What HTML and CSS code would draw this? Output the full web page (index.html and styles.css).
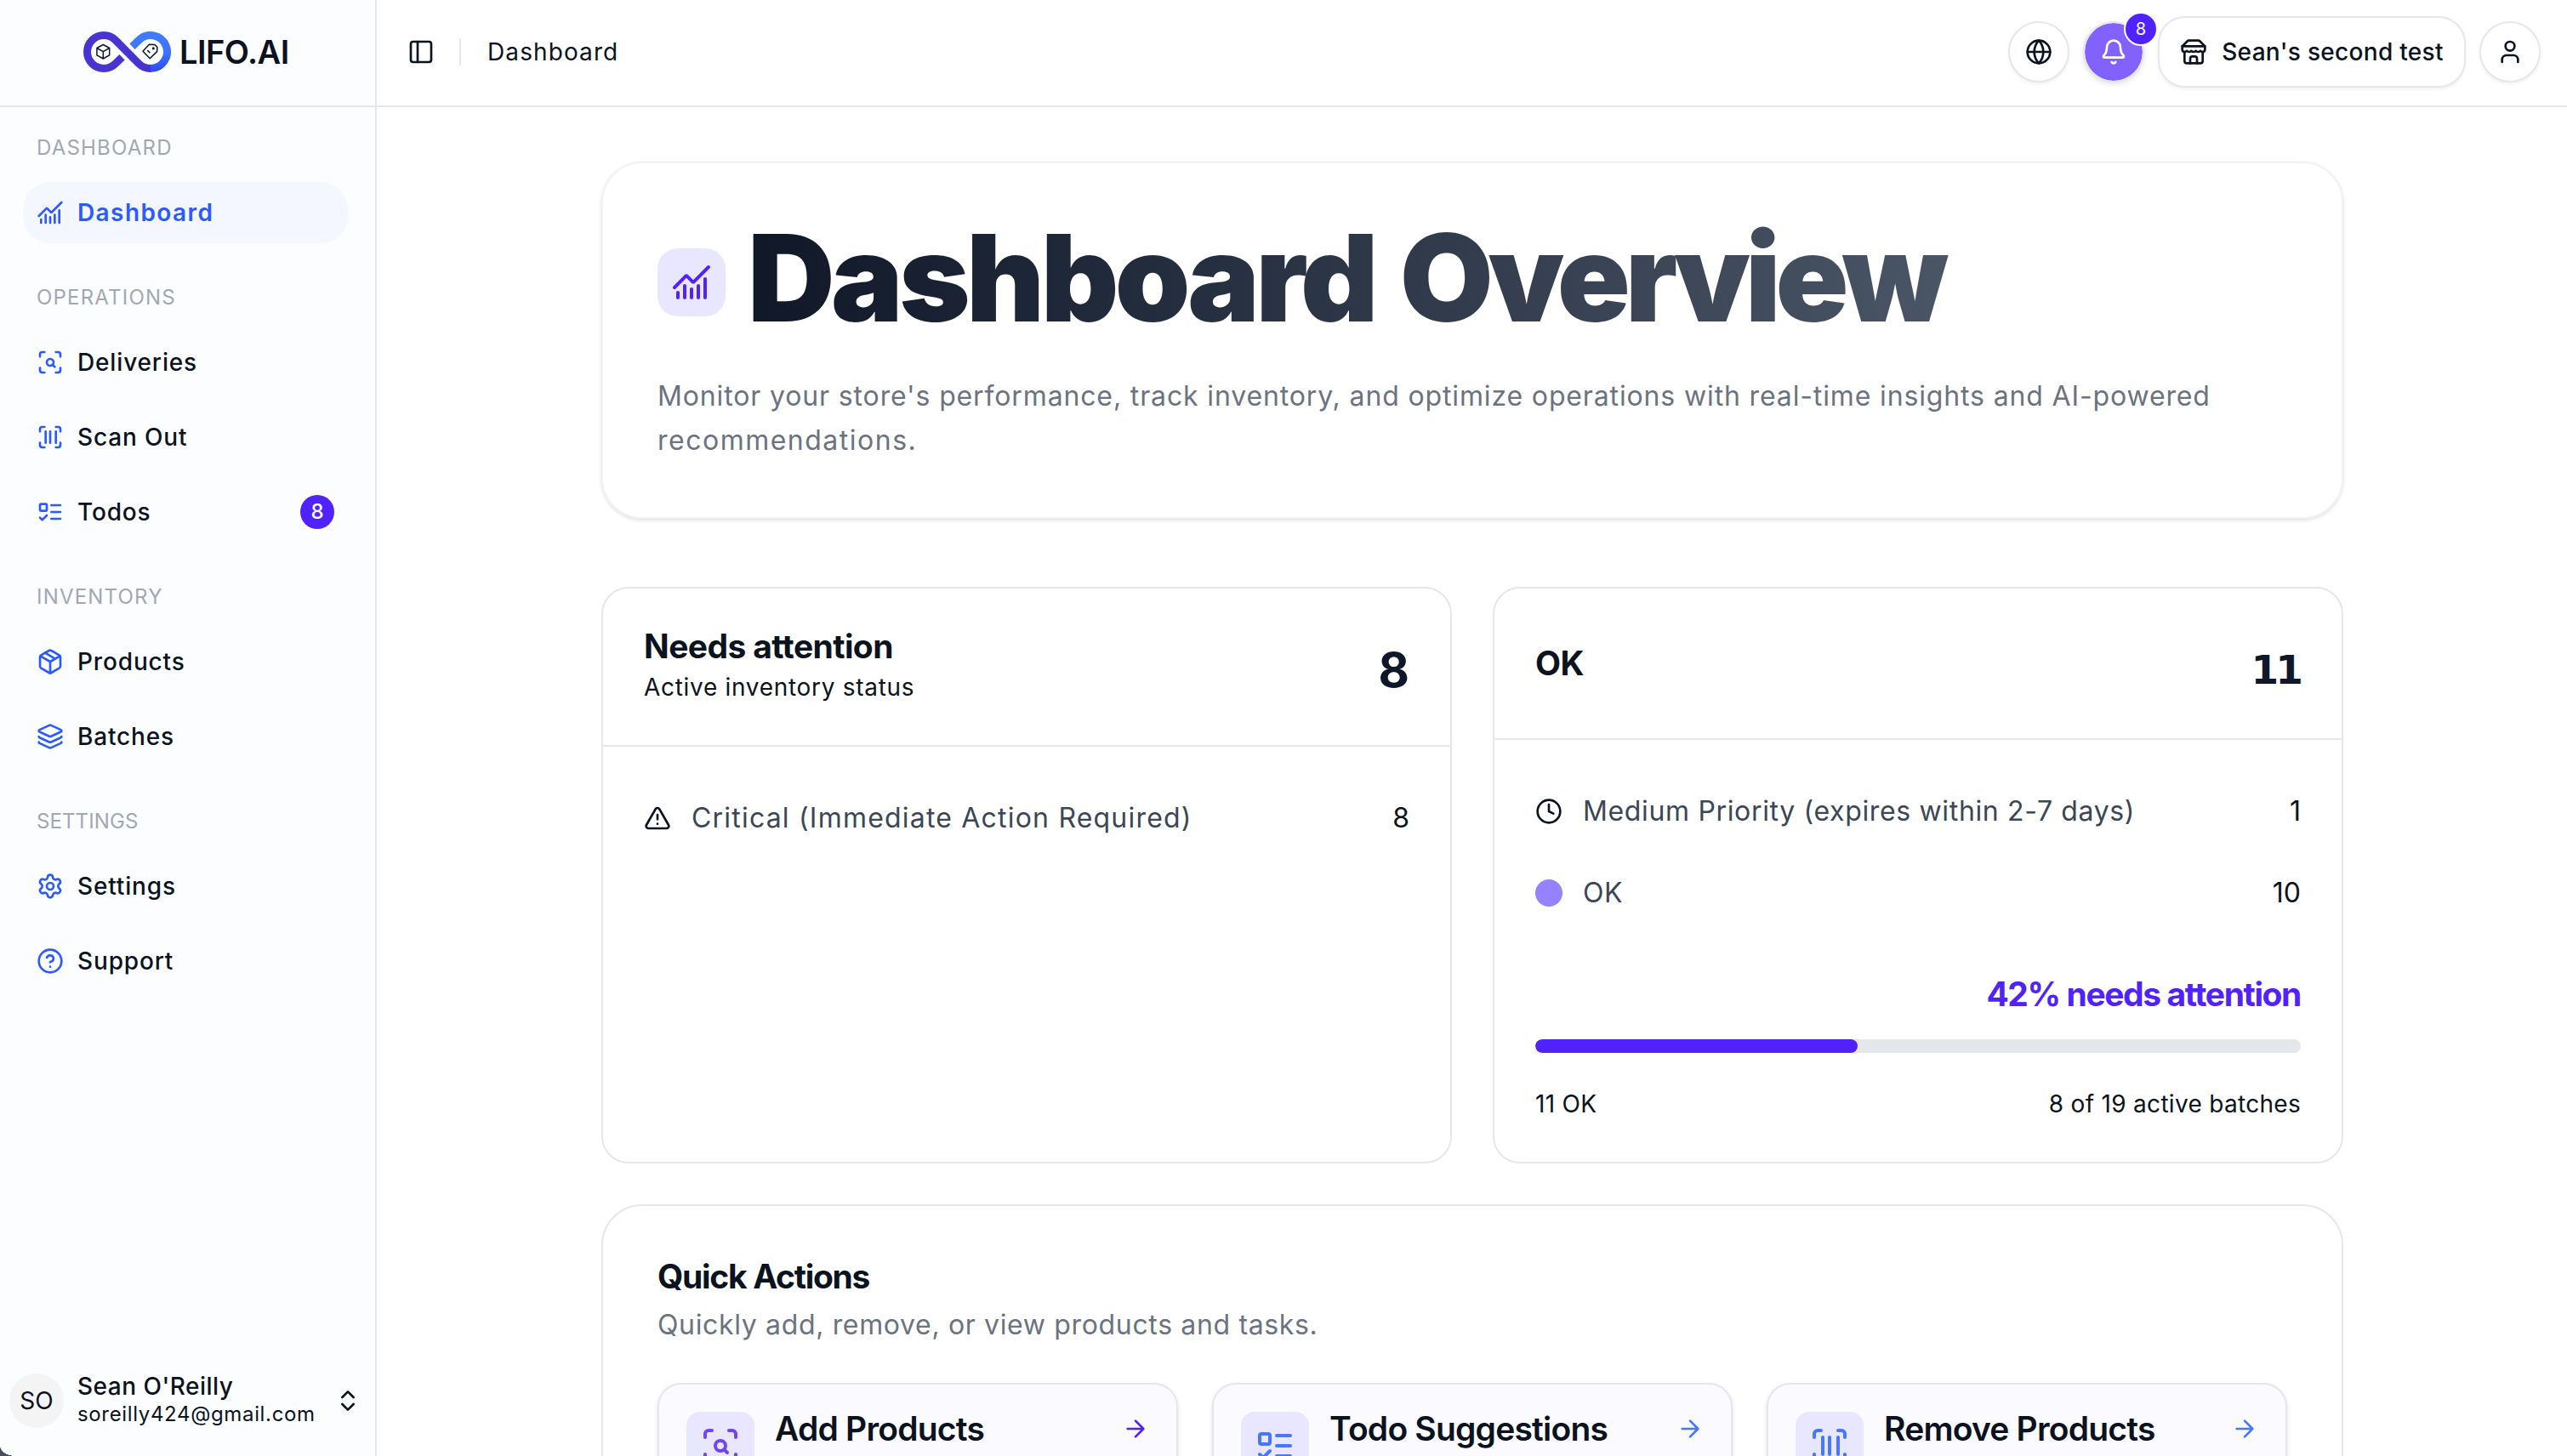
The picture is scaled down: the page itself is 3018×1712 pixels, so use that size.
FILE: index.html
```html
<!DOCTYPE html>
<html lang="en">

<head>
    <meta charset="UTF-8">
    <meta name="viewport" content="width=device-width, initial-scale=1.0">
    <title>Dashboard - LIFO.AI</title>
    <link rel="stylesheet" href="styles.css">
</head>

<body>
    <!-- shared icons -->
    <svg class="icon-defs" aria-hidden="true">
        <symbol id="i-chart" viewBox="0 0 24 24">
            <path d="M12 16v5M16 14v7M20 10v11M8 14v7M4 18v3" />
            <path d="m22 3-8.646 8.646a.5.5 0 0 1-.708 0L9.354 8.354a.5.5 0 0 0-.707 0L2 15" />
        </symbol>
        <symbol id="i-scan-search" viewBox="0 0 24 24">
            <path d="M3 7V5a2 2 0 0 1 2-2h2M17 3h2a2 2 0 0 1 2 2v2M21 17v2a2 2 0 0 1-2 2h-2M7 21H5a2 2 0 0 1-2-2v-2" />
            <circle cx="12" cy="12" r="3" />
            <path d="m16 16-1.9-1.9" />
        </symbol>
        <symbol id="i-barcode" viewBox="0 0 24 24">
            <path d="M3 7V5a2 2 0 0 1 2-2h2M17 3h2a2 2 0 0 1 2 2v2M21 17v2a2 2 0 0 1-2 2h-2M7 21H5a2 2 0 0 1-2-2v-2" />
            <path d="M8 7v10M12 7v10M17 7v10" />
        </symbol>
        <symbol id="i-todo" viewBox="0 0 24 24">
            <rect x="3" y="5" width="6" height="6" rx="1" />
            <path d="m3 17 2 2 4-4M13 6h8M13 12h8M13 18h8" />
        </symbol>
        <symbol id="i-package" viewBox="0 0 24 24">
            <path d="M11 21.73a2 2 0 0 0 2 0l7-4A2 2 0 0 0 21 16V8a2 2 0 0 0-1-1.73l-7-4a2 2 0 0 0-2 0l-7 4A2 2 0 0 0 3 8v8a2 2 0 0 0 1 1.73z" />
            <path d="M12 22V12M3.29 7 12 12l8.71-5M7.5 4.27l9 5.15" />
        </symbol>
        <symbol id="i-layers" viewBox="0 0 24 24">
            <path d="M12.83 2.18a2 2 0 0 0-1.66 0L2.6 6.08a1 1 0 0 0 0 1.83l8.58 3.91a2 2 0 0 0 1.66 0l8.58-3.9a1 1 0 0 0 0-1.83z" />
            <path d="M2 12a1 1 0 0 0 .58.91l8.6 3.91a2 2 0 0 0 1.65 0l8.58-3.9A1 1 0 0 0 22 12" />
            <path d="M2 17a1 1 0 0 0 .58.91l8.6 3.91a2 2 0 0 0 1.65 0l8.58-3.9A1 1 0 0 0 22 17" />
        </symbol>
        <symbol id="i-settings" viewBox="0 0 24 24">
            <path d="M9.671 4.136a2.34 2.34 0 0 1 4.659 0 2.34 2.34 0 0 0 3.319 1.915 2.34 2.34 0 0 1 2.33 4.033 2.34 2.34 0 0 0 0 3.831 2.34 2.34 0 0 1-2.33 4.033 2.34 2.34 0 0 0-3.319 1.915 2.34 2.34 0 0 1-4.659 0 2.34 2.34 0 0 0-3.32-1.915 2.34 2.34 0 0 1-2.33-4.033 2.34 2.34 0 0 0 0-3.831A2.34 2.34 0 0 1 6.35 6.051a2.34 2.34 0 0 0 3.319-1.915" />
            <circle cx="12" cy="12" r="3" />
        </symbol>
        <symbol id="i-help" viewBox="0 0 24 24">
            <circle cx="12" cy="12" r="10" />
            <path d="M9.09 9a3 3 0 0 1 5.83 1c0 2-3 3-3 3M12 17h.01" />
        </symbol>
        <symbol id="i-arrow" viewBox="0 0 24 24">
            <path d="M5 12h14M12 5l7 7-7 7" />
        </symbol>
    </svg>

    <aside class="sidebar">
        <div class="brand">
            <svg class="brand-mark" width="103" height="48" viewBox="0 0 103 48" fill="none">
                <defs>
                    <linearGradient id="loop" x1="0" y1="0" x2="0" y2="1">
                        <stop offset="0" stop-color="#417bfd" />
                        <stop offset=".55" stop-color="#3c72fb" />
                        <stop offset="1" stop-color="#2d50f6" />
                    </linearGradient>
                </defs>
                <path d="M79 43.5A19.5 19.5 0 1 0 65.2 10.2L57.5 17.8" stroke="url(#loop)" stroke-width="9" />
                <path d="M45.5 30.2L37.8 37.8A19.5 19.5 0 1 1 37.8 10.2L65.2 37.8Q71 43.5 79 43.5" stroke="#4834cf" stroke-width="9" />
                <g stroke="#0f172a" stroke-width="1.5" stroke-linejoin="round" stroke-linecap="round">
                    <path d="M23.3 15.5l7.4 4v8.4l-7.4 4.1-7.4-4.1v-8.4zM15.9 19.5l7.4 4.2 7.4-4.2M23.3 23.7V32" />
                    <path d="M77.4 15.3l6.6.1 2.9 3.2-.3 5-8.4 8.2-8.2-8.5zM75.8 22.6l2.2 2.2" />
                    <path d="M82.3 19.8v.1" stroke-width="3" />
                </g>
            </svg>
            <span class="brand-name">LIFO.AI</span>
        </div>

        <nav class="nav">
            <div class="nav-group">
                <div class="nav-label">DASHBOARD</div>
                <a class="nav-item active"><svg class="icon"><use href="#i-chart" /></svg><span>Dashboard</span></a>
            </div>
            <div class="nav-group">
                <div class="nav-label">OPERATIONS</div>
                <a class="nav-item"><svg class="icon"><use href="#i-scan-search" /></svg><span>Deliveries</span></a>
                <a class="nav-item"><svg class="icon"><use href="#i-barcode" /></svg><span>Scan Out</span></a>
                <a class="nav-item"><svg class="icon"><use href="#i-todo" /></svg><span>Todos</span><b class="nav-badge">8</b></a>
            </div>
            <div class="nav-group">
                <div class="nav-label">INVENTORY</div>
                <a class="nav-item"><svg class="icon"><use href="#i-package" /></svg><span>Products</span></a>
                <a class="nav-item"><svg class="icon"><use href="#i-layers" /></svg><span>Batches</span></a>
            </div>
            <div class="nav-group">
                <div class="nav-label tight">SETTINGS</div>
                <a class="nav-item"><svg class="icon"><use href="#i-settings" /></svg><span>Settings</span></a>
                <a class="nav-item"><svg class="icon"><use href="#i-help" /></svg><span>Support</span></a>
            </div>
        </nav>

        <div class="user">
            <div class="avatar">SO</div>
            <div class="user-info">
                <div class="user-name">Sean O'Reilly</div>
                <div class="user-mail">soreilly424@gmail.com</div>
            </div>
            <svg class="icon" viewBox="0 0 24 24"><path d="m7 15 5 5 5-5M7 9l5-5 5 5" /></svg>
        </div>
        <div class="window-corner"></div>
    </aside>

    <div class="page">
        <header class="topbar">
            <svg class="icon" viewBox="0 0 24 24">
                <rect x="3" y="3" width="18" height="18" rx="2" />
                <path d="M9 3v18" />
            </svg>
            <span class="divider"></span>
            <span class="crumb">Dashboard</span>
            <div class="top-actions">
                <button class="round-btn">
                    <svg class="icon" viewBox="0 0 24 24">
                        <circle cx="12" cy="12" r="10" />
                        <path d="M12 2a14.5 14.5 0 0 0 0 20 14.5 14.5 0 0 0 0-20M2 12h20" />
                    </svg>
                </button>
                <button class="round-btn bell">
                    <svg class="icon" viewBox="0 0 24 24">
                        <path d="M10.268 21a2 2 0 0 0 3.464 0" />
                        <path d="M3.262 15.326A1 1 0 0 0 4 17h16a1 1 0 0 0 .74-1.673C19.41 13.956 18 12.499 18 8A6 6 0 0 0 6 8c0 4.499-1.411 5.956-2.738 7.326" />
                    </svg>
                    <span class="bell-badge">8</span>
                </button>
                <button class="store-btn">
                    <svg class="icon" viewBox="0 0 24 24">
                        <path d="m2 7 4.41-4.41A2 2 0 0 1 7.83 2h8.34a2 2 0 0 1 1.42.59L22 7M4 12v8a2 2 0 0 0 2 2h12a2 2 0 0 0 2-2v-8" />
                        <path d="M15 22v-4a2 2 0 0 0-2-2h-2a2 2 0 0 0-2 2v4M2 7h20M22 7v3a2 2 0 0 1-2 2a2.7 2.7 0 0 1-1.59-.63.7.7 0 0 0-.82 0A2.7 2.7 0 0 1 16 12a2.7 2.7 0 0 1-1.59-.63.7.7 0 0 0-.82 0A2.7 2.7 0 0 1 12 12a2.7 2.7 0 0 1-1.59-.63.7.7 0 0 0-.82 0A2.7 2.7 0 0 1 8 12a2.7 2.7 0 0 1-1.59-.63.7.7 0 0 0-.82 0A2.7 2.7 0 0 1 4 12a2 2 0 0 1-2-2V7" />
                    </svg>
                    <span>Sean's second test</span>
                </button>
                <button class="round-btn">
                    <svg class="icon" viewBox="0 0 24 24">
                        <circle cx="12" cy="7" r="4" />
                        <path d="M19 21v-2a4 4 0 0 0-4-4H9a4 4 0 0 0-4 4v2" />
                    </svg>
                </button>
            </div>
        </header>

        <main class="content">
            <section class="hero">
                <div class="hero-head">
                    <div class="tile hero-tile"><svg class="icon icon-lg"><use href="#i-chart" /></svg></div>
                    <h1>Dashboard <span>Overview</span></h1>
                </div>
                <p>Monitor your store's performance, track inventory, and optimize operations with real-time insights and AI-powered<br><span class="hero-wrap">recommendations.</span></p>
            </section>

            <section class="status-grid">
                <div class="card">
                    <div class="card-head">
                        <div>
                            <h2>Needs attention</h2>
                            <div class="card-sub">Active inventory status</div>
                        </div>
                        <div class="count">8</div>
                    </div>
                    <div class="card-body">
                        <div class="row">
                            <svg class="icon" viewBox="0 0 24 24">
                                <path d="m21.73 18-8-14a2 2 0 0 0-3.48 0l-8 14A2 2 0 0 0 4 21h16a2 2 0 0 0 1.73-3M12 9v4M12 17h.01" />
                            </svg>
                            <span class="row-name wide">Critical (Immediate Action Required)</span>
                            <span class="row-value">8</span>
                        </div>
                    </div>
                </div>

                <div class="card">
                    <div class="card-head">
                        <h2>OK</h2>
                        <div class="count count-ones">11</div>
                    </div>
                    <div class="card-body">
                        <div class="row">
                            <svg class="icon" viewBox="0 0 24 24">
                                <circle cx="12" cy="12" r="10" />
                                <path d="M12 6v6l4 2" />
                            </svg>
                            <span class="row-name">Medium Priority (expires within 2-7 days)</span>
                            <span class="row-value">1</span>
                        </div>
                        <div class="row">
                            <span class="dot"></span>
                            <span class="row-name">OK</span>
                            <span class="row-value">10</span>
                        </div>
                        <div class="percent">42% needs attention</div>
                        <div class="bar"><div class="bar-fill" style="width: 42.1%"></div></div>
                        <div class="bar-legend">
                            <span>11 OK</span>
                            <span>8 of 19 active batches</span>
                        </div>
                    </div>
                </div>
            </section>

            <section class="quick">
                <h2>Quick Actions</h2>
                <p>Quickly add, remove, or view products and tasks.</p>
                <div class="quick-grid">
                    <a class="action violet">
                        <div class="tile"><svg class="icon icon-lg"><use href="#i-scan-search" /></svg></div>
                        <h3>Add Products</h3>
                        <svg class="icon arrow"><use href="#i-arrow" /></svg>
                    </a>
                    <a class="action">
                        <div class="tile"><svg class="icon icon-lg"><use href="#i-todo" /></svg></div>
                        <h3>Todo Suggestions</h3>
                        <svg class="icon arrow"><use href="#i-arrow" /></svg>
                    </a>
                    <a class="action">
                        <div class="tile"><svg class="icon icon-lg"><use href="#i-barcode" /></svg></div>
                        <h3>Remove Products</h3>
                        <svg class="icon arrow"><use href="#i-arrow" /></svg>
                    </a>
                </div>
            </section>
        </main>
    </div>
</body>

</html>
```
FILE: styles.css
```css
* {
    box-sizing: border-box;
}

body {
    margin: 0;
    height: 100vh;
    display: flex;
    overflow: hidden;
    background: #fff;
    color: #0b1220;
    font-family: Inter, "Liberation Sans", sans-serif;
    font-size: 28px;
    line-height: 40px;
}

h1,
h2,
h3,
p {
    margin: 0;
}

button {
    font: inherit;
    color: inherit;
    padding: 0;
}

.icon-defs {
    display: none;
}

.icon {
    width: 32px;
    height: 32px;
    flex: none;
    fill: none;
    stroke: currentColor;
    stroke-width: 2;
    stroke-linecap: round;
    stroke-linejoin: round;
}

.icon-lg {
    width: 48px;
    height: 48px;
}

/* Sidebar */
.sidebar {
    position: relative;
    width: 443px;
    height: 100vh;
    flex: none;
    display: flex;
    flex-direction: column;
    background: #fcfdff;
    border-right: 2px solid #e5e7eb;
}

.brand {
    height: 126px;
    flex: none;
    display: flex;
    align-items: center;
    gap: 10px;
    padding: 0 0 2px 98px;
    border-bottom: 2px solid #e5e7eb;
}

.brand-name {
    font-size: 38px;
    font-weight: 600;
    letter-spacing: -0.5px;
}

.nav {
    flex: 1;
    display: flex;
    flex-direction: column;
    gap: 38px;
    padding: 22px 32px 0 27px;
}

.nav-group {
    display: flex;
    flex-direction: column;
    gap: 16px;
}

.nav-label {
    height: 50px;
    line-height: 52px;
    padding-left: 16px;
    font-size: 24px;
    letter-spacing: 1.2px;
    color: #a1a8b4;
}

.nav-label.tight {
    letter-spacing: 0.1px;
}

.nav-item {
    height: 72px;
    display: flex;
    align-items: center;
    gap: 16px;
    padding: 0 16px;
    border-radius: 32px;
    font-weight: 500;
    letter-spacing: 0.85px;
}

.nav-item .icon {
    color: #2b5bff;
}

.nav-item.active {
    background: #f4f7ff;
    color: #2b5bff;
    font-weight: 600;
    letter-spacing: 1.4px;
}

.nav-badge {
    width: 40px;
    height: 40px;
    margin-left: auto;
    border-radius: 50%;
    background: #4f22ff;
    color: #fff;
    font-size: 24px;
    font-weight: 500;
    letter-spacing: 0;
    text-align: center;
}

.user {
    display: flex;
    align-items: center;
    height: 130px;
    padding: 0 16px 0 11px;
}

.avatar {
    width: 64px;
    height: 64px;
    margin-right: 16px;
    border-radius: 50%;
    background: #f4f4f5;
    line-height: 64px;
    text-align: center;
}

.user-info {
    flex: 1;
    padding-bottom: 2px;
}

.user-name {
    line-height: 34px;
    font-weight: 500;
    letter-spacing: 0.5px;
}

.user-mail {
    font-size: 24px;
    line-height: 32px;
    letter-spacing: 0.65px;
}

/* rounded window edge, bottom left */
.window-corner {
    position: absolute;
    left: 0;
    bottom: 0;
    width: 18px;
    height: 12px;
    background: radial-gradient(ellipse 18px 12px at 100% 0, transparent 98%, #4a4c5b 100%);
}

/* Top bar */
.page {
    flex: 1;
    display: flex;
    flex-direction: column;
}

.topbar {
    height: 126px;
    flex: none;
    display: flex;
    align-items: center;
    padding: 0 31px 2px 36px;
    border-bottom: 2px solid #e5e7eb;
}

.divider {
    width: 2px;
    height: 32px;
    margin: 0 31px 0 29px;
    background: #e5e7eb;
}

.crumb {
    letter-spacing: 1.1px;
}

.top-actions {
    margin-left: auto;
    display: flex;
    align-items: center;
    gap: 16px;
}

.round-btn,
.store-btn {
    display: flex;
    align-items: center;
    justify-content: center;
    border: 2px solid #e5e7eb;
    background: #fff;
    box-shadow: 0 2px 4px rgba(0, 0, 0, 0.06);
}

.round-btn {
    position: relative;
    width: 72px;
    height: 72px;
    border-radius: 50%;
}

.bell {
    background: #8262ff;
    background-clip: padding-box;
    color: #fff;
    box-shadow: 0 2px 6px rgba(0, 0, 0, 0.12);
}

.bell-badge {
    position: absolute;
    top: -13px;
    right: -18px;
    width: 40px;
    height: 40px;
    border: 2px solid #fff;
    border-radius: 50%;
    background: #4f22ff;
    font-size: 20px;
    line-height: 36px;
    text-align: center;
}

.store-btn {
    width: 362px;
    height: 84px;
    gap: 17px;
    border-radius: 32px;
    font-weight: 500;
    letter-spacing: 0.3px;
}

/* Content */
.content {
    flex: 1;
    width: 2312px;
    padding: 64px 0 0 264px;
}

.hero {
    height: 420px;
    padding: 64px;
    border: 2px solid #f1f2f4;
    border-radius: 48px;
    box-shadow: 0 2px 4px rgba(0, 0, 0, 0.12), 0 0 2px rgba(0, 0, 0, 0.04);
}

.hero-head {
    height: 152px;
    display: flex;
    align-items: center;
    gap: 26px;
}

.tile {
    width: 80px;
    height: 80px;
    flex: none;
    display: flex;
    align-items: center;
    justify-content: center;
    border-radius: 16px;
    background: #e9e6ff;
}

.hero-tile {
    border-radius: 24px;
    color: #4f22ff;
}

h1 {
    padding: 0 12px 11px 0;
    font-size: 142px;
    line-height: 141px;
    font-weight: 900;
    letter-spacing: -4.6px;
    word-spacing: 6px;
    background: linear-gradient(90deg, #101828, #4a5565);
    -webkit-background-clip: text;
    background-clip: text;
    color: transparent;
}

h1 span {
    letter-spacing: -6.2px;
}

.hero p,
.quick p {
    font-size: 32px;
    line-height: 52px;
    color: #6b7280;
}

.hero p {
    margin-top: 32px;
    white-space: nowrap;
    letter-spacing: 0.86px;
}

.hero p .hero-wrap {
    letter-spacing: 1.5px;
}

.status-grid {
    display: grid;
    grid-template-columns: 1fr 1fr;
    gap: 48px;
    margin: 80px 0 48px;
}

.card {
    height: 678px;
    border: 2px solid #e5e7eb;
    border-radius: 32px;
}

h2 {
    font-size: 39px;
    line-height: 40px;
    font-weight: 700;
    letter-spacing: -0.6px;
}

.card-head {
    display: flex;
    align-items: center;
    justify-content: space-between;
    padding: 48px;
    border-bottom: 2px solid #e5e7eb;
}

.card-sub {
    margin-top: 8px;
    letter-spacing: 0.7px;
}

.count {
    height: 80px;
    padding-top: 4px;
    font-size: 56px;
    line-height: 80px;
    font-weight: 700;
    color: #0f172a;
}

.count-ones {
    margin-right: -5px;
    padding-top: 8px;
    font-family: "DejaVu Sans", sans-serif;
    font-size: 47px;
    letter-spacing: -4px;
    transform: translateX(-6px);
}

.card-body {
    padding: 48px;
}

.row {
    height: 72px;
    display: flex;
    align-items: center;
    gap: 24px;
    margin-bottom: 24px;
    font-size: 32px;
}

.row-name {
    flex: 1;
    color: #3b4656;
    letter-spacing: 0.65px;
}

.row-name.wide {
    letter-spacing: 1.2px;
}

.dot {
    width: 32px;
    height: 32px;
    border-radius: 50%;
    background: #9681ff;
}

.percent {
    margin-top: 63px;
    font-size: 39px;
    font-weight: 700;
    letter-spacing: -1.4px;
    text-align: right;
    color: #4f22ff;
}

.bar {
    height: 16px;
    margin: 33px 0 40px;
    border-radius: 8px;
    background: #e5e7eb;
    overflow: hidden;
}

.bar-fill {
    height: 100%;
    border-radius: 8px;
    background: #4f22ff;
}

.bar-legend {
    display: flex;
    justify-content: space-between;
    letter-spacing: 0.3px;
}

/* Quick actions */
.quick {
    height: 600px;
    padding: 64px;
    border: 2px solid #e5e7eb;
    border-radius: 48px;
}

.quick h2 {
    line-height: 38px;
    letter-spacing: -1.3px;
}

.quick p {
    margin: 12px 0 42px;
    letter-spacing: 0.65px;
}

.quick-grid {
    display: grid;
    grid-template-columns: repeat(3, 1fr);
    gap: 40px;
}

.action {
    height: 320px;
    display: flex;
    align-items: flex-start;
    padding: 32px;
    border: 2px solid #e5e7eb;
    border-radius: 28px;
    background: #fbfaff;
    box-shadow: 0 2px 5px rgba(0, 0, 0, 0.12);
    color: #4478ff;
}

.action.violet {
    color: #6f45f5;
}

.action h3 {
    flex: 1;
    margin-left: 24px;
    font-size: 39px;
    line-height: 40px;
    font-weight: 600;
    letter-spacing: -0.8px;
    color: #0b1220;
}

.arrow {
    margin: 4px 0 0;
}

.violet .arrow {
    color: #4f22ff;
}
```
